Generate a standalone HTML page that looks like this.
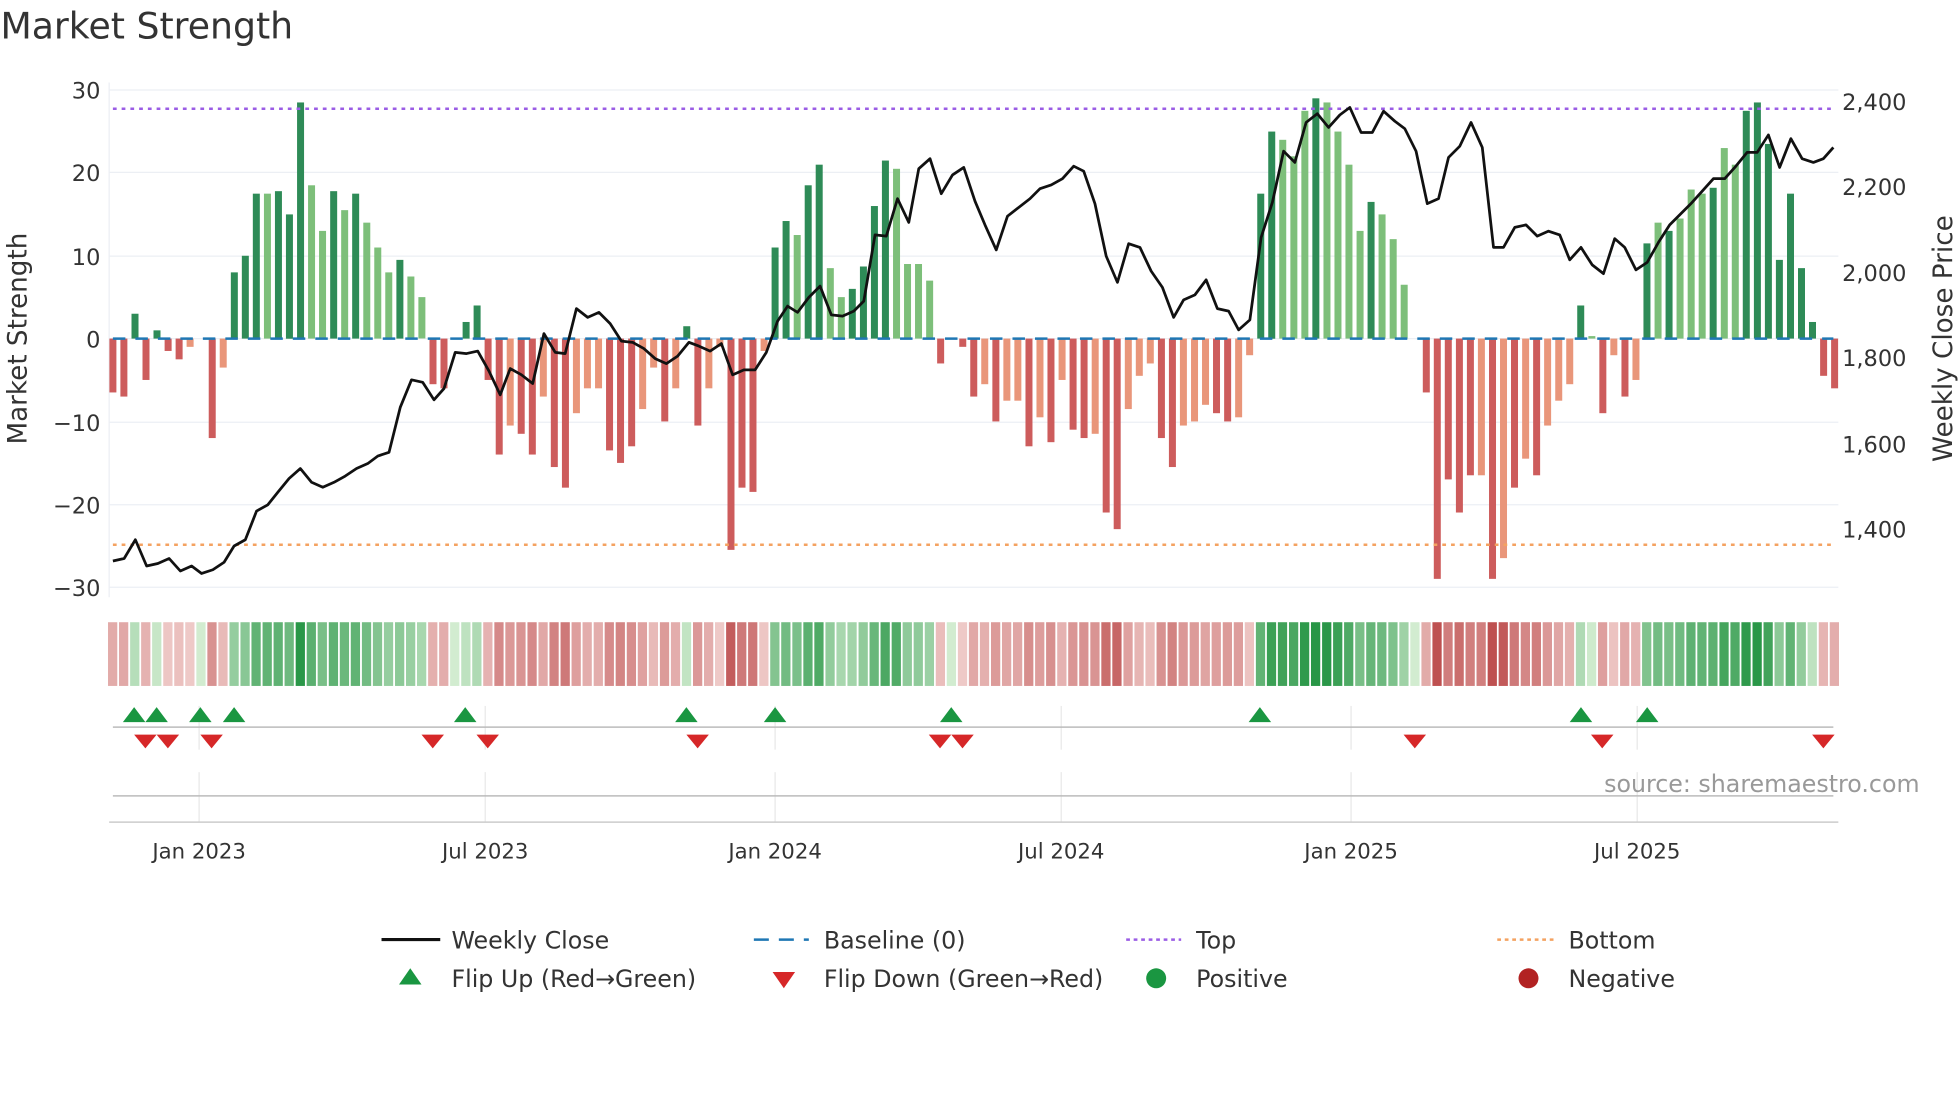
<!DOCTYPE html>
<html><head><meta charset="utf-8"><style>
html,body{margin:0;padding:0;background:#fff;width:1960px;height:1102px;overflow:hidden}
svg{display:block}
text{font-family:"DejaVu Sans","Liberation Sans",sans-serif;fill:#333}
</style></head><body>
<svg id="s" width="1960" height="1102" viewBox="0 0 1568 882" xmlns="http://www.w3.org/2000/svg">
<text x="0" y="31" font-size="29" fill="#333">Market Strength</text>
<g stroke="#eceff4" stroke-width="1">
<line x1="87" x2="1471" y1="72" y2="72"/><line x1="87" x2="1471" y1="138" y2="138"/><line x1="87" x2="1471" y1="205" y2="205"/><line x1="87" x2="1471" y1="271" y2="271"/><line x1="87" x2="1471" y1="338" y2="338"/><line x1="87" x2="1471" y1="404" y2="404"/><line x1="87" x2="1471" y1="470" y2="470"/>
<line x1="87" x2="87" y1="66" y2="478"/>
</g>
<g font-size="18" text-anchor="end">
<text x="80" y="79">30</text><text x="80" y="145">20</text><text x="80" y="212">10</text><text x="80" y="278">0</text><text x="80" y="345">−10</text><text x="80" y="411">−20</text><text x="80" y="477">−30</text>
</g>
<g font-size="18">
<text x="1474" y="88">2,400</text><text x="1474" y="156">2,200</text><text x="1474" y="225">2,000</text><text x="1474" y="293">1,800</text><text x="1474" y="362">1,600</text><text x="1474" y="430">1,400</text>
</g>
<text transform="translate(21,271) rotate(-90)" font-size="21" text-anchor="middle">Market Strength</text>
<text transform="translate(1562,271) rotate(-90)" font-size="21" text-anchor="middle">Weekly Close Price</text>
<g id="bars"></g>
<line x1="90" x2="1467" y1="271" y2="271" stroke="#1f77b4" stroke-width="2" stroke-dasharray="10,8"/>
<line x1="90" x2="1467" y1="87" y2="87" stroke="#9b5de5" stroke-width="2" stroke-dasharray="3,4"/>
<line x1="90" x2="1467" y1="436" y2="436" stroke="#f4a261" stroke-width="2" stroke-dasharray="3,4"/>
<polyline id="price" fill="none" stroke="#111" stroke-width="2.2" stroke-linejoin="round"/>
<g id="heat"></g>
<g stroke="#e8e8e8" stroke-width="1">
<line x1="159" x2="159" y1="565" y2="600"/><line x1="388" x2="388" y1="565" y2="600"/><line x1="620" x2="620" y1="565" y2="600"/><line x1="849" x2="849" y1="565" y2="600"/><line x1="1081" x2="1081" y1="565" y2="600"/><line x1="1310" x2="1310" y1="565" y2="600"/>
<line x1="159" x2="159" y1="618" y2="658"/><line x1="388" x2="388" y1="618" y2="658"/><line x1="620" x2="620" y1="618" y2="658"/><line x1="849" x2="849" y1="618" y2="658"/><line x1="1081" x2="1081" y1="618" y2="658"/><line x1="1310" x2="1310" y1="618" y2="658"/>
</g>
<line x1="90" x2="1467" y1="582" y2="582" stroke="#bbb" stroke-width="1.2"/>
<line x1="90" x2="1467" y1="637" y2="637" stroke="#bbb" stroke-width="1.2"/>
<line x1="87" x2="1471" y1="658" y2="658" stroke="#ccc" stroke-width="1.2"/>
<g id="marks"></g>
<text x="1536" y="634" font-size="19" fill="#999" style="fill:#999" text-anchor="end">source: sharemaestro.com</text>
<g font-size="17" text-anchor="middle">
<text x="159" y="687">Jan 2023</text><text x="388" y="687">Jul 2023</text><text x="620" y="687">Jan 2024</text><text x="849" y="687">Jul 2024</text><text x="1081" y="687">Jan 2025</text><text x="1310" y="687">Jul 2025</text>
</g>
<g font-size="19">
<line x1="305" x2="352" y1="752" y2="752" stroke="#111" stroke-width="2.5"/><text x="361" y="759">Weekly Close</text>
<line x1="603" x2="647" y1="752" y2="752" stroke="#1f77b4" stroke-width="2" stroke-dasharray="12,8"/><text x="659" y="759">Baseline (0)</text>
<line x1="901" x2="945" y1="752" y2="752" stroke="#9b5de5" stroke-width="2" stroke-dasharray="3,3"/><text x="957" y="759">Top</text>
<line x1="1198" x2="1243" y1="752" y2="752" stroke="#f4a261" stroke-width="2" stroke-dasharray="3,3"/><text x="1255" y="759">Bottom</text>
<polygon points="319,788 337,788 328,775" fill="#1a9641"/><text x="361" y="790">Flip Up (Red→Green)</text>
<polygon points="618,778 636,778 627,791" fill="#d62728"/><text x="659" y="790">Flip Down (Green→Red)</text>
<circle cx="925" cy="783" r="8" fill="#1a9641"/><text x="957" y="790">Positive</text>
<circle cx="1223" cy="783" r="8" fill="#b22222"/><text x="1255" y="790">Negative</text>
</g>
</svg>
<script>
var v=[-6.5,-7,3,-5,1,-1.5,-2.5,-1,0,-12,-3.5,8,10,17.5,17.5,17.8,15,28.5,18.5,13,17.8,15.5,17.5,14,11,8,9.5,7.5,5,-5.5,-6,0,2,4,-5,-14,-10.5,-11.5,-14,-7,-15.5,-18,-9,-6,-6,-13.5,-15,-13,-8.5,-3.5,-10,-6,1.5,-10.5,-6,-1,-25.5,-18,-18.5,-1.5,11,14.2,12.5,18.5,21,8.5,5,6,8.7,16,21.5,20.5,9,9,7,-3,0,-1,-7,-5.5,-10,-7.5,-7.5,-13,-9.5,-12.5,-5,-11,-12,-11.5,-21,-23,-8.5,-4.5,-3,-12,-15.5,-10.5,-10,-8,-9,-10,-9.5,-2,17.5,25,24,22,27.5,29,28.5,25,21,13,16.5,15,12,6.5,0,-6.5,-29,-17,-21,-16.5,-16.5,-29,-26.5,-18,-14.5,-16.5,-10.5,-7.5,-5.5,4,0.3,-9,-2,-7,-5,11.5,14,13,14.5,18,17.5,18.2,23,21,27.5,28.5,23.5,9.5,17.5,8.5,2,-4.5,-6];
var light={};[14,18,19,21,23,24,25,27,28,62,65,66,71,72,73,74,106,107,108,110,111,112,113,115,116,117,134,135,137,138,140,142,143,144,146,147].forEach(function(i){light[i]=1});
var n=v.length,dx=(1468-90)/(n-1),b='',h='';
function mix(a,c,t){return 'rgb('+[0,1,2].map(function(k){return Math.round(a[k]+(c[k]-a[k])*t)}).join(',')+')'}
for(var i=0;i<n;i++){var x=90+i*dx,val=v[i],y=271-val*6.63,col;
 if(val>0){col=light[i]?'#7dbf7a':'#2e8b57'}else{var pv=i>0?v[i-1]:0;col=(val<pv-0.1||val<-12&&i%2)?'#cd5c5c':'#e9967a'}
 if(Math.abs(val)>0.2)b+='<rect x="'+(x-2.8).toFixed(1)+'" y="'+Math.min(y,271).toFixed(1)+'" width="5.6" height="'+Math.abs(val*6.63).toFixed(1)+'" fill="'+col+'"/>';
 var t=Math.min(Math.abs(val)/29,1),hc=val>=0?mix([210,236,208],[40,150,70],Math.pow(t,0.8)):mix([242,210,208],[190,80,80],Math.pow(t,0.8));
 h+='<rect x="'+(x-3.9).toFixed(1)+'" y="498" width="7.4" height="51" fill="'+hc+'"/>';}
document.getElementById('bars').innerHTML=b;document.getElementById('heat').innerHTML=h;
var p=[90,449,99,447,108,432,117,453,126,451,135,447,144,457,153,453,161,459,170,456,179,450,187,437,196,432,205,409,214,404,222,394,231,383,240,375,249,386,258,390,267,386,276,381,285,375,294,371,302,365,311,362,320,326,329,304,338,306,347,320,355,311,364,282,373,283,382,281,391,297,400,316,408,295,417,300,426,307,435,267,444,282,452,283,461,247,470,254,479,250,488,259,497,273,506,274,515,279,524,287,533,291,542,285,551,274,559,277,568,281,577,275,586,300,595,296,604,296,613,282,622,257,630,245,638,250,647,238,656,229,665,252,674,253,683,249,691,241,700,188,709,189,718,159,727,178,735,135,744,127,753,155,762,140,771,134,780,161,788,180,797,200,806,173,815,166,824,159,832,151,841,148,850,143,859,133,867,137,876,163,885,205,894,226,903,195,912,198,921,217,930,230,939,254,947,240,956,236,965,224,974,247,983,249,991,264,1000,256,1009,190,1018,162,1027,121,1036,130,1045,98,1054,91,1063,102,1072,92,1080,86,1089,106,1098,106,1107,89,1116,97,1124,103,1133,121,1142,163,1151,159,1159,126,1168,117,1177,98,1186,118,1195,198,1203,198,1212,182,1221,180,1230,189,1239,185,1248,188,1256,208,1265,198,1274,212,1283,219,1292,191,1300,198,1309,216,1318,210,1327,194,1336,180,1345,171,1353,163,1362,153,1371,143,1380,143,1389,133,1398,122,1406,122,1415,108,1424,134,1433,111,1442,127,1451,130,1459,127,1467,118];
var ps='';for(var j=0;j<p.length;j+=2)ps+=p[j]+','+p[j+1]+' ';document.getElementById('price').setAttribute('points',ps);
var m='';[107,125,160,187,372,549,620,761,1008,1265,1318].forEach(function(x){m+='<polygon points="'+(x-9)+',578 '+(x+9)+',578 '+x+',566" fill="#1a9641"/>'});
[116,134,169,346,390,558,752,770,1132,1282,1459].forEach(function(x){m+='<polygon points="'+(x-9)+',588 '+(x+9)+',588 '+x+',599" fill="#d62728"/>'});
document.getElementById('marks').innerHTML=m;
</script>
</body></html>
